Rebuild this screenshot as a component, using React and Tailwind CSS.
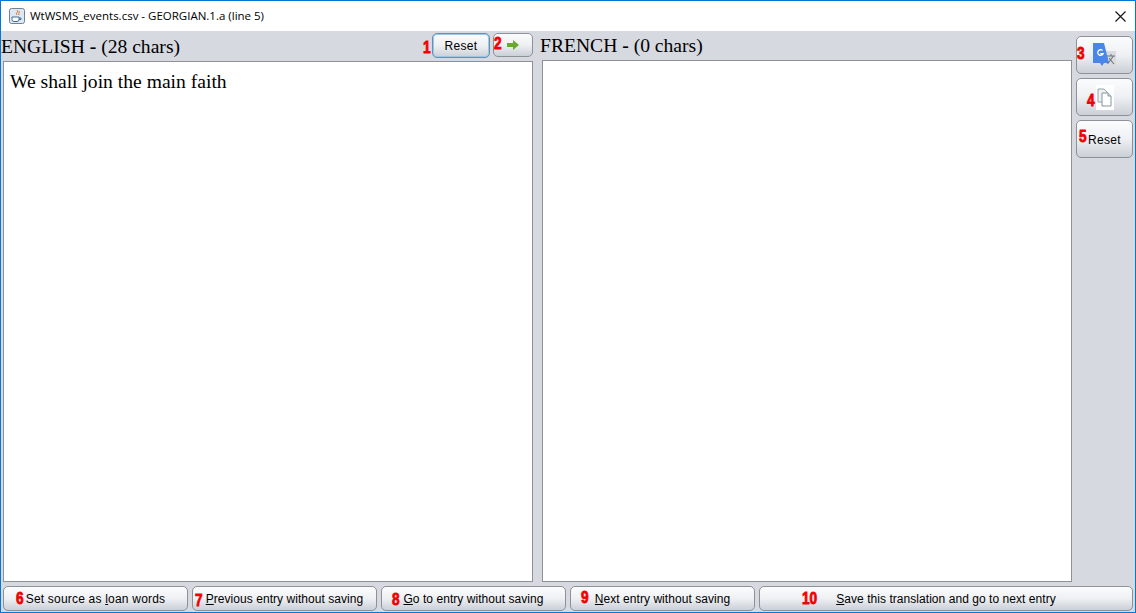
import React from 'react';

const btn = 'relative flex items-center justify-center rounded-[5px] border border-[#8e9197] bg-gradient-to-b from-[#fbfcfd] via-[#eef0f3] to-[#cbd0d7] text-black';
const mark = "absolute origin-left scale-x-[0.85] font-['Liberation_Sans',sans-serif] text-[16px] font-bold leading-none text-[#f00000] [-webkit-text-stroke:0.8px_#f00000]";

const Mark = ({ className, children }) => <span className={`${mark} ${className}`}>{children}</span>;

const BottomButton = ({ className, num, numClass, children }) => (
  <button className={`${btn} h-[25px] text-[12px] tracking-[0.05px] ${className}`}>
    <Mark className={numClass}>{num}</Mark>
    <span>{children}</span>
  </button>
);

const CoffeeIcon = () => (
  <svg width="16" height="16" viewBox="0 0 16 16">
    <rect x="0.5" y="0.5" width="15" height="15" rx="2" fill="#dfe8f2" stroke="#6f8296" />
    <path d="M8 2c2 2-2 3 0 5M10 3c1 1.500-1 2 0 4" stroke="#d4762c" strokeWidth="1" fill="none" />
    <path d="M3 9h7v2.500a2 2 0 0 1-2 2H5a2 2 0 0 1-2-2z" fill="#fff" stroke="#3f6f9e" />
    <path d="M10 10h2v1.500h-2" stroke="#3f6f9e" fill="none" />
  </svg>
);

const TranslateIcon = () => (
  <svg width="23" height="24" viewBox="0 0 23 24">
    <rect x="10" y="8" width="13" height="15" fill="#d9dbde" />
    <path d="M0 0h11l5 20h-5l-2 3-2-3H0z" fill="#4a86e8" />
    <path d="M9.500 7.500a2.800 2.800 0 1 0 .6 3.200H7.300" stroke="#fff" strokeWidth="1.300" fill="none" />
    <path d="M14 13h8M18 11v2M14.500 21l6-8M16 15l5 6" stroke="#70757a" strokeWidth="1.100" fill="none" />
  </svg>
);

const CopyIcon = () => (
  <svg width="18" height="25" viewBox="0 0 18 25">
    <rect width="18" height="25" fill="#fff" />
    <path d="M2 4h6l3 3v10H2z" fill="#eef2f3" stroke="#93a3a8" />
    <path d="M6 8h6l3 3v10H6z" fill="#fff" stroke="#84979d" />
    <path d="M12 8v3h3" fill="#dfe6e8" stroke="#84979d" />
  </svg>
);

const App = () => {
  return (
    <div className="flex h-[613px] w-[1136px] flex-col border border-[#0078d7] bg-[#d6d9e0] font-['Liberation_Sans',sans-serif]">
      {/* Title bar */}
      <div className="flex h-[30px] items-center bg-white pl-[8px] pr-[9px]">
        <CoffeeIcon />
        <span className="ml-[5px] flex-1 font-['Open_Sans',sans-serif] text-[11.500px] text-black">WtWSMS_events.csv - GEORGIAN.1.a (line 5)</span>
        <svg width="11" height="11" viewBox="0 0 11 11">
          <path d="M0.500 0.500l10 10M10.500 0.500l-10 10" stroke="#111" strokeWidth="1.100" />
        </svg>
      </div>

      <div className="flex min-h-0 flex-1">
        {/* English column */}
        <div className="flex w-[532px] flex-col">
          <div className="flex h-[30px] items-start">
            <span className="mt-[6px] flex-1 font-['Liberation_Serif',serif] text-[19.600px] leading-[20px] text-black">
              ENGLISH <b>-</b> (28 chars)
            </span>
            <button className={`${btn} mt-[2px] h-[25px] w-[58px] !border-[#5f93bd] text-[12px] tracking-[0.3px] shadow-[inset_0_0_0_1px_#a3c6e0]`}>
              <Mark className="left-[-10px] top-[6px]">1</Mark>
              Reset
            </button>
            <button className={`${btn} ml-[3px] mt-[2px] h-[24px] w-[40px]`}>
              <Mark className="left-[0px] top-[2px]">2</Mark>
              <svg width="12" height="10" viewBox="0 0 12 10">
                <path d="M0 3h6V0l6 5-6 5V7H0z" fill="#6aa92d" />
              </svg>
            </button>
          </div>
          <div className="ml-[2px] flex-1 border border-[#8e9197] bg-white pl-[6px] pt-[9px] font-['Liberation_Serif',serif] text-[19.600px] leading-[22px] text-black">
            We shall join the main faith
          </div>
        </div>

        {/* French column */}
        <div className="ml-[7px] flex w-[532px] flex-col">
          <div className="h-[29px] pt-[5px] font-['Liberation_Serif',serif] text-[19.600px] leading-[20px] text-black">
            FRENCH <b>-</b> (0 chars)
          </div>
          <div className="ml-[2px] flex-1 border border-[#8e9197] bg-white" />
        </div>

        {/* Side buttons */}
        <div className="ml-[4px] flex w-[57px] flex-col gap-[4px] pt-[5px]">
          <button className={`${btn} h-[38px]`}>
            <Mark className="left-[0px] top-[9px]">3</Mark>
            <TranslateIcon />
          </button>
          <button className={`${btn} h-[38px]`}>
            <Mark className="left-[10px] top-[14px]">4</Mark>
            <CopyIcon />
          </button>
          <button className={`${btn} h-[38px] pt-[1px] text-[12px] tracking-[0.3px]`}>
            <Mark className="left-[2px] top-[8px]">5</Mark>
            Reset
          </button>
        </div>
      </div>

      {/* Bottom buttons */}
      <div className="flex h-[30px] gap-[4px] pl-[2px] pr-[2px] pt-[4px]">
        <BottomButton className="w-[185px]" num="6" numClass="left-[12px] top-[4px]">
          <span className="tracking-[0.2px]">Set source as <u>l</u>oan words</span>
        </BottomButton>
        <BottomButton className="w-[185px]" num="7" numClass="left-[2px] top-[6px]">
          <u>P</u>revious entry without saving
        </BottomButton>
        <BottomButton className="w-[185px]" num="8" numClass="left-[10px] top-[5px]">
          <u>G</u>o to entry without saving
        </BottomButton>
        <BottomButton className="w-[185px]" num="9" numClass="left-[10px] top-[3px]">
          <u>N</u>ext entry without saving
        </BottomButton>
        <BottomButton className="w-[374px]" num="10" numClass="left-[42px] top-[4px]">
          <u>S</u>ave this translation and go to next entry
        </BottomButton>
      </div>
    </div>
  );
};

export default App;
